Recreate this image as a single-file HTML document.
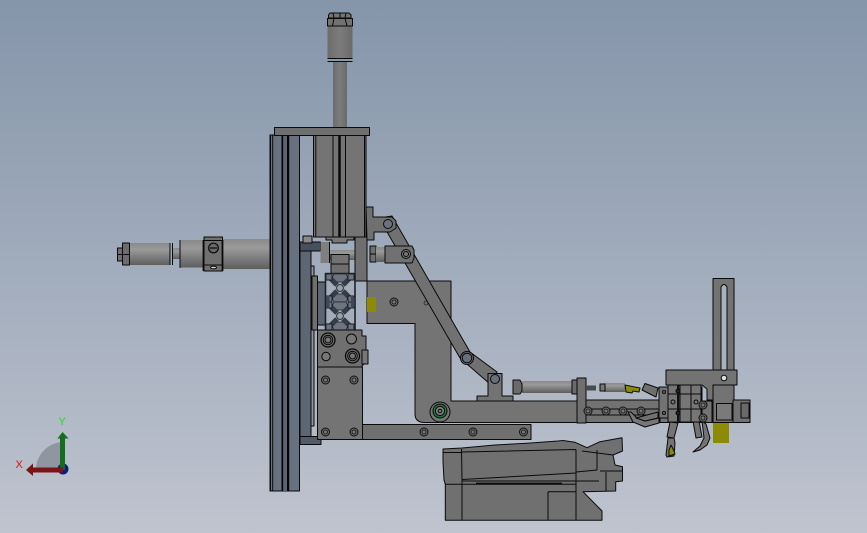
<!DOCTYPE html>
<html><head><meta charset="utf-8"><title>CAD assembly</title>
<style>html,body{margin:0;padding:0;width:867px;height:533px;overflow:hidden;background:#a0abbb}svg{display:block}</style></head>
<body>
<svg width="867" height="533" viewBox="0 0 867 533" xmlns="http://www.w3.org/2000/svg" font-family="Liberation Sans, sans-serif">
<defs>
<linearGradient id="bg" x1="0" y1="0" x2="0" y2="1"><stop offset="0" stop-color="#8595aa"/><stop offset=".5" stop-color="#a1acbc"/><stop offset="1" stop-color="#bfc4cf"/></linearGradient>
<linearGradient id="h" x1="0" y1="0" x2="0" y2="1"><stop offset="0" stop-color="#8a8a8a"/><stop offset=".3" stop-color="#9a9a9a"/><stop offset="1" stop-color="#5e5e5e"/></linearGradient>
<linearGradient id="v" x1="0" y1="0" x2="1" y2="0"><stop offset="0" stop-color="#6c6c6c"/><stop offset=".5" stop-color="#7c7c7c"/><stop offset="1" stop-color="#6a6a6a"/></linearGradient>
<g id="b"><circle r="4" fill="#6a6a6a" stroke="#111" stroke-width="1"/><circle r="2" fill="#777" stroke="#111" stroke-width=".8"/></g>
<g id="prof">
<path d="M-6,-14H6L8,-10L3,-6H-3L-8,-10Z" fill="#6f7580" stroke="#1c222b" stroke-width=".8"/>
<path d="M-6,14H6L8,10L3,6H-3L-8,10Z" fill="#6f7580" stroke="#1c222b" stroke-width=".8"/>
<path d="M-12,-12L-3,-3M12,-12L3,-3M-12,12L-3,3M12,12L3,3" stroke="#333c49" stroke-width="5"/>
<circle r="3.400" fill="#9aa0a8" stroke="#1c222b" stroke-width=".9"/>
<rect x="-14" y="-14" width="6" height="6" fill="#6f7580" stroke="#1c222b" stroke-width="1"/>
<rect x="8" y="-14" width="6" height="6" fill="#6f7580" stroke="#1c222b" stroke-width="1"/>
<rect x="-14" y="8" width="6" height="6" fill="#6f7580" stroke="#1c222b" stroke-width="1"/>
<rect x="8" y="8" width="6" height="6" fill="#6f7580" stroke="#1c222b" stroke-width="1"/>
</g>
</defs>
<rect width="867" height="533" fill="url(#bg)"/>

<g stroke="#0a0a0a" stroke-width="1" fill="#6f6f6f" stroke-linejoin="round">
<!-- top vertical cylinder -->
<rect x="333" y="62" width="14" height="65.500" fill="url(#v)" stroke="none"/>
<rect x="327.500" y="26" width="25" height="32" fill="url(#v)" stroke="none"/>
<path d="M327.500,58.500H352.500M327.500,61.500H352.500" fill="none"/>
<path d="M328.500,18V15L330,13H349L351,15V18Z" fill="#747474"/>
<rect x="327.500" y="18.500" width="25" height="7.500" fill="#727272"/>
<path d="M333,13L334,18L332.500,26M340,13V18M346,13L345,18L347,26" fill="none"/>
<!-- left horizontal cylinder -->
<rect x="129" y="243" width="41" height="22" fill="url(#h)" stroke="none"/>
<rect x="172" y="248" width="8" height="11" fill="url(#h)" stroke="none"/>
<rect x="180" y="240" width="24" height="27.500" fill="url(#h)" stroke="none"/>
<rect x="222" y="239" width="48" height="30" fill="url(#h)" stroke="none"/>
<path d="M170,243V265M172.500,243V265M180,240V268M129.500,243V265" fill="none"/>
<rect x="122.500" y="243" width="7" height="22" fill="#6c6c6c"/>
<rect x="117.500" y="248" width="5" height="13" fill="#707070"/><path d="M117.500,254.500H129" fill="none"/>
<rect x="204" y="237" width="18.500" height="34" fill="#707070"/><path d="M204,240.500H222.500M204,265H222.500" fill="none"/>
<path d="M203.500,240V271M222.500,240V271" fill="none" stroke-width="1.800"/>
<circle cx="213.500" cy="248" r="4.800" fill="#6a6a6a" stroke-width="1.200"/><path d="M210,248H217" fill="none" stroke-width="1.200"/>
<ellipse cx="213.500" cy="267.500" rx="3" ry="1.300" fill="#ddd"/>

<!-- rail -->
<rect x="270" y="135" width="29.500" height="356" fill="#68717f"/>
<rect x="283" y="135" width="4" height="356" fill="#5c6573" stroke="none"/>
<path d="M270.500,135V491M272.700,135V491M299.500,135V491" fill="none"/>
<rect x="281.500" y="135" width="1.700" height="356" fill="#050505" stroke="none"/>
<rect x="287" y="135" width="2.200" height="356" fill="#050505" stroke="none"/>

<!-- cylinder body -->
<rect x="313.500" y="135" width="52.500" height="102" fill="#747474"/>
<path d="M315.800,135V237M333,135V237M345.500,135V237M364.500,135V237" fill="none"/>
<rect x="338.300" y="135" width="2.400" height="102" fill="#050505" stroke="none"/>
<rect x="274.500" y="127.500" width="95" height="8" fill="#6f6f6f"/>
<path d="M326,237H354V240H347V243H332V240H326Z" fill="#777"/>

<!-- dark mount panels -->
<rect x="300" y="242" width="11" height="195" fill="#5d6673"/>
<rect x="311" y="266" width="3" height="160" fill="#8e96a2"/>
<path d="M300,242H320.500V251H300Z" fill="#46505e"/>
<rect x="300" y="436.500" width="21" height="8" fill="#515b69"/>
<rect x="303" y="236" width="9" height="7" fill="#8a8a8a"/>
<!-- rod middle -->
<rect x="320.500" y="242" width="9" height="21" fill="#7f7f7f" stroke="none"/>
<rect x="329" y="250" width="33" height="10" fill="url(#h)" stroke="none"/>
<path d="M329.500,242V263" fill="none"/>
<rect x="331" y="254.500" width="18" height="9.500" fill="#727272"/>
<rect x="331" y="264" width="18" height="9.500" fill="#6e6e6e"/>
<rect x="355" y="237" width="12" height="44" fill="#6f6f6f"/>

<!-- L bracket -->
<path d="M367,281H451V401H451L478,401H750V422.500H425Q415,422.500 415,414V323.500H367Z" fill="#747474"/>
<rect x="367" y="297" width="9" height="15" fill="#8d8a05" stroke="none"/>
<use href="#b" x="394" y="302"/>
<circle cx="426" cy="303" r="2" fill="#6f6f6f" stroke-width=".6"/>
<!-- link -->
<path d="M379,218L392,216L470,352L497,372L490,384L460,358Z" fill="#717171"/>
<circle cx="467" cy="358" r="6.500" fill="#747474"/><circle cx="467" cy="358" r="4.800" fill="#667080"/>
<!-- lug -->
<path d="M366,207H373V217H392L396,221L396,228L390,232H374V240H367Z" fill="#707070"/>
<circle cx="388" cy="224" r="4.500" fill="#6a7280"/>
<!-- clevis -->
<rect x="370" y="246" width="6" height="16" fill="#6f6f6f"/><path d="M370,254H376" fill="none"/>
<rect x="376" y="247" width="9" height="15" fill="url(#h)" stroke="none"/>
<path d="M385,246H412L414,250V258L412,263H385Z" fill="#717171"/>
<circle cx="406" cy="254" r="4.500" fill="#777"/><circle cx="406" cy="254" r="2.500" fill="#777"/>
<!-- mount -->
<path d="M477,401V396H488V373.500H502V396H513V401Z" fill="#737373"/>
<circle cx="495" cy="379" r="4.500" fill="#667080"/>
<!-- pivot -->
<circle cx="440" cy="412" r="10" fill="#757575"/>
<circle cx="440" cy="411" r="7" fill="#1f7a3d" stroke="#0a0a0a"/>
<circle cx="440" cy="411" r="4.600" fill="#7d7d7d"/><circle cx="440" cy="411" r="1.800" fill="#777"/>

<!-- extrusion -->
<rect x="312" y="276" width="5.500" height="54" fill="#6f6f6f"/>
<rect x="317.500" y="282" width="8" height="43" fill="#5c6572"/>
<rect x="325.500" y="273.500" width="29.500" height="57" fill="#a4adba" stroke="#1c222b" stroke-width="1.600"/>
<use href="#prof" x="340" y="288"/>
<use href="#prof" x="340" y="316"/>
<rect x="326" y="297" width="3.500" height="10" fill="#3f4754" stroke="none"/>
<rect x="351" y="297" width="3.500" height="10" fill="#3f4754" stroke="none"/>

<!-- lower plates -->
<rect x="362" y="424.500" width="169" height="15" fill="#707070"/>
<rect x="317.500" y="367" width="45" height="72.500" fill="#747474"/>
<path d="M317.500,330H362V336H366V362L362,366V367H317.500Z" fill="#707070"/>
<rect x="362" y="350" width="6" height="14" fill="#777"/>
<circle cx="328" cy="340" r="7" fill="#707070" stroke-width="1.300"/><circle cx="328" cy="340" r="4.800" fill="#757575"/><circle cx="328" cy="340" r="3" fill="#777"/>
<circle cx="351.500" cy="339" r="5" fill="#777"/>
<circle cx="326" cy="356.500" r="4.200" fill="#777"/>
<circle cx="352.500" cy="356" r="7" fill="#707070" stroke-width="1.300"/><circle cx="352.500" cy="356" r="4.800" fill="#757575"/><circle cx="352.500" cy="356" r="3" fill="#777"/>
<use href="#b" x="325.500" y="380"/><use href="#b" x="354" y="380"/>
<use href="#b" x="325.500" y="432"/><use href="#b" x="354" y="432"/>
<use href="#b" x="424" y="432"/><use href="#b" x="473" y="432"/><use href="#b" x="523.500" y="432"/>

<!-- right cylinder -->
<rect x="522" y="381" width="50" height="12" fill="url(#h)" stroke="none"/>
<path d="M513,380H520L522,384V391L520,394H513Z" fill="#6a6a6a"/>
<path d="M572,380H581L583,384V391L581,394H572Z" fill="#6a6a6a"/>
<rect x="577" y="378" width="9" height="45" fill="#6f6f6f"/>
<rect x="586" y="385.500" width="10" height="5" fill="#4a4a4a" stroke="none"/>
<rect x="604" y="383" width="21" height="9" fill="url(#h)" stroke="none"/><rect x="600" y="384" width="5" height="7" fill="#777"/>
<!-- slide -->
<rect x="586" y="400" width="74" height="22.500" fill="#727272"/>
<path d="M586,409H659M586,415H659" fill="none"/>
<use href="#b" x="588" y="411"/><use href="#b" x="606" y="411"/><use href="#b" x="623" y="411"/><use href="#b" x="641" y="411"/>
<!-- fingers upper -->
<path d="M625,385L640,388L639,392L633,391L632,393L626,392Z" fill="#8d8a05"/>
<path d="M645,383.500L658,388L656,397L642,390Z" fill="#6f6f6f"/>
<path d="M628,412L633,422L645,427L659,423V418L645,421L637,418L631,412Z" fill="#777"/>
<path d="M636,418L658,412V418L645,421Z" fill="#707070"/>
<!-- lower fingers -->
<path d="M670,422L678,423L674,438L667,437Z" fill="#747474"/>
<path d="M668,438L674,438L675,443L674,456L667,457L666,455Z" fill="#747474"/>
<path d="M671,445L674,451L675,454L669,456L669,450Z" fill="#8d8a05"/>
<path d="M693,421L699,421L702,437L696,438Z" fill="#737373"/>
<path d="M702,421L706,424L710,438L707,445L700,450L693,452L700,446L704,438Z" fill="#737373"/>
<!-- block -->
<rect x="659" y="387" width="43" height="31" fill="#737373"/>
<rect x="668" y="381" width="33" height="41" fill="#767676"/>
<path d="M680,381V422M691,381V422M668,394H701M668,409H701" fill="none"/>
<rect x="677" y="381" width="2.200" height="41" fill="#111" stroke="none"/>
<circle cx="673" cy="402" r="2" fill="#777"/><circle cx="696" cy="402" r="2" fill="#777"/><circle cx="678" cy="391" r="2" fill="#222"/><circle cx="678" cy="413" r="2" fill="#222"/>
<circle cx="664" cy="392" r="1.500" fill="#777"/><circle cx="664" cy="413" r="1.500" fill="#777"/>
<use href="#b" x="703" y="405"/><use href="#b" x="703" y="418"/>
<!-- vertical slot and top plate -->
<rect x="713" y="278.500" width="21" height="92" fill="#737373"/>
<path d="M721,370V287Q724,282 727,287V370Z" fill="#a8b1be"/>
<path d="M666,370H737V385H713V422.500H712V400H707V389L702,385H666Z" fill="#737373"/>
<circle cx="724" cy="378" r="2.800" fill="#d8dde3"/>
<rect x="713" y="385" width="21" height="37.500" fill="#737373"/>
<rect x="733" y="400" width="17" height="22.500" fill="#727272"/>
<rect x="741" y="403" width="8" height="15" fill="#6a6a6a"/>
<rect x="716.500" y="403.500" width="15.500" height="16.500" fill="#7a7a7a"/>
<rect x="713" y="423" width="16" height="20" fill="#8d8a05" stroke="none"/>

<!-- seat -->
<path d="M443,449L462,448L495,445L527,443.300L558,441L563,440.500L575,442.300L587,447.700L600,441.700L622,437.700L622.500,451L613,455L615,465L622.500,466.700L622.500,481L615.700,481.700V491L583,491.700L602,511V520.300H445.300V484.300L444,480L443,462Z" fill="#707070"/>
<path d="M443.500,452.500H461.500M461.500,449L462,480V520M445.300,484.300H576V520M462,479.500L576,473M576,449.500V491.700M462,452L576,449.500M548,491.700H576V520.300M548,491.700V520.300M462,481H599M582,451L613,455M597,450V470M606,472V491M600,471H622M597,470L576,472" fill="none"/>
<path d="M476,483.500H562" fill="none" stroke-width="1.800"/>

<!-- triad -->
<path d="M36,471A28,28 0 0 1 62,442V471Z" fill="#8f96a2" stroke="none"/>
<circle cx="63" cy="469" r="5.500" fill="#101a7d" stroke="none"/>
<rect x="60" y="438" width="5" height="32" fill="#146d1c" stroke="none"/>
<path d="M57.500,438.500L62.500,432L68.500,438.500Z" fill="#146d1c" stroke="none"/>
<rect x="33" y="467.500" width="30" height="5" fill="#7b1414" stroke="none"/>
<path d="M33,463.500L26,470L33,476Z" fill="#7b1414" stroke="none"/>
</g>
<text x="58.500" y="425" font-size="11" fill="#22dd22">Y</text>
<text x="15.500" y="468" font-size="11" fill="#e01010">X</text>
</svg>
</body></html>
